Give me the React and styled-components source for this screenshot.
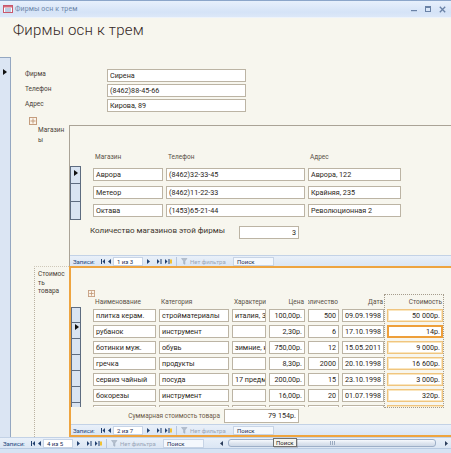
import React from 'react';
import styled, { createGlobalStyle } from 'styled-components';

const FONT = `Roboto, "Open Sans", "Noto Sans", sans-serif`;

const GlobalStyle = createGlobalStyle`
  html, body { margin: 0; padding: 0; background: #f7f6ee; overflow: hidden; }
  #root { width: 451px; height: 453px; }
  * { box-sizing: border-box; }
`;

const Window = styled.div`
  width: 451px; height: 453px; display: flex; flex-direction: column; overflow: hidden;
  background: #f7f6ee; font-family: ${FONT}; color: #2b2620; position: relative;
`;

const TitleBar = styled.div`
  height: 18px; flex: none; display: flex; align-items: center; padding: 0 4px 0 3px;
  border-top: 1px solid #8ca6ca;
  background: linear-gradient(#e7f0fc, #d5e3f7 70%, #dce8f8);
  border-bottom: 1px solid #edf3fb;
`;
const TitleText = styled.span`
  font-size: 7px; color: #6d86aa; margin-left: 2px; flex: 1; letter-spacing: 0.1px;
`;
const WinControls = styled.div`
  display: flex; align-items: center; gap: 8px; padding-right: 1px;
`;

const FormHeader = styled.div`
  height: 39px; flex: none; padding: 1px 0 0 13px;
`;
const FormTitle = styled.h1`
  margin: 0; font-weight: 300; font-size: 15px; line-height: 22px; color: #35271f; letter-spacing: 0.2px;
`;

const MainArea = styled.div`
  display: flex; height: 380px; flex: none;
`;
const FormSelector = styled.div`
  width: 11px; flex: none; background: #dbe5f3; border-right: 1px solid #94a7c1;
  border-top: 1px solid #94a7c1; padding: 2px 0 0 3px;
`;
const Detail = styled.div`
  flex: 1; min-width: 0; display: flex; flex-direction: column; overflow: hidden;
`;

const FieldGrid = styled.div`
  display: grid; grid-template-columns: 82px 139px; row-gap: 2px; padding: 12px 0 0 14px;
`;
const FieldLabel = styled.div`
  font-size: 6.5px; line-height: 11px; color: #4a4238;
`;
const Box = styled.div`
  height: ${p => p.$h || 13}px;
  border: 1px solid #bcb4a4;
  background: #fff;
  font-size: 7.2px;
  line-height: ${p => (p.$h || 13) - 2}px;
  padding: 0 2px;
  white-space: nowrap;
  overflow: hidden;
  text-overflow: clip;
  text-align: ${p => (p.$right ? 'right' : 'left')};
  color: #2b2620;
  ${p => p.$accent && `border-color: #f0c57f; box-shadow: 0 0 0 1px #fae6bf inset;`}
  ${p => p.$focus && `border: 2px solid #ee9f3a; line-height: ${(p.$h || 13) - 4}px; padding: 0 1px; box-shadow: none;`}
`;

const ExpandWrap = styled.div`
  margin: ${p => p.$mt}px 0 0 ${p => p.$ml}px; width: ${p => p.$s}px; height: ${p => p.$s}px; line-height: 0;
`;

const SubRow = styled.div`
  display: grid; grid-template-columns: 58px 1fr; height: ${p => p.$h}px; flex: none;
`;
const SubLabelCol = styled.div`
  padding-left: ${p => p.$pl}px;
`;
const SubLabelText = styled.div`
  width: 28px; font-size: 6.5px; line-height: ${p => p.$lh}px; color: #4a4238; overflow-wrap: anywhere;
`;
const DottedLabel = styled.div`
  width: 35px; height: 100%; border-left: 1px dotted #bab2a2; border-top: 1px dotted #cfc8b9;
  padding: 3px 0 0 3px;
`;

const Subform1 = styled.div`
  border-top: 1px solid #aaa396; border-left: 1px solid #aaa396;
  display: flex; flex-direction: column; min-width: 0;
`;
const Subform2 = styled.div`
  border: 2px solid #eea43f; border-right: none;
  display: flex; flex-direction: column; min-width: 0; position: relative;
`;

const HeaderRow = styled.div`
  display: grid; grid-template-columns: ${p => p.$cols}; column-gap: 3px;
  margin: ${p => p.$mt}px 0 0 ${p => p.$ml}px; height: ${p => p.$h}px;
`;
const HeadCell = styled.div`
  font-size: 6.5px; line-height: ${p => p.$h}px; color: #5a5247; white-space: nowrap; overflow: hidden;
  display: flex; justify-content: ${p => (p.$right ? 'flex-end' : 'flex-start')};
  padding: 0 ${p => (p.$right ? 1 : 0)}px 0 ${p => (p.$right ? 0 : 2)}px;
  & > span { flex: none; }
`;

const Rows = styled.div`
  height: ${p => p.$h}px; overflow: hidden; flex: none; margin-top: ${p => p.$mt || 0}px;
`;
const DataRow = styled.div`
  display: flex; height: ${p => p.$h}px;
`;
const RowSelector = styled.div`
  width: ${p => p.$w}px; flex: none; height: 100%;
  background: #d9e4f2;
  border: 1px solid #5e6c80;
  border-top-width: ${p => (p.$first ? 1 : 0)}px;
  padding: ${p => p.$pt}px 0 0 3px; line-height: 0;
`;
const Cells = styled.div`
  display: grid; grid-template-columns: ${p => p.$cols}; column-gap: 3px;
  margin-left: ${p => p.$ml}px; padding-top: ${p => p.$pt}px; align-content: start;
`;

const CountRow = styled.div`
  display: flex; align-items: center; margin-top: 6px; padding-left: 20px; height: 13px;
`;
const CountLabel = styled.div`
  width: 149px; font-size: 8px; color: #3c352d; white-space: nowrap; line-height: 11px; margin-top: -4px;
`;
const SumRow = styled.div`
  display: flex; align-items: center; margin-top: 2px; height: 14px; flex: none;
`;
const SumLabel = styled.div`
  width: 149px; text-align: right; font-size: 6.5px; color: #6b5a48; white-space: nowrap;
`;

const ColumnOutline = styled.div`
  position: absolute; left: 313px; top: 26px; width: 60px; height: 114px;
  border: 1px dotted #a59c8c; pointer-events: none;
`;

/* Navigation bars */
const NavWrap = styled.div`
  height: 11px; flex: none; display: flex; align-items: center;
  background: linear-gradient(#e9f0f9, #dbe6f4);
  border-top: 1px solid #c3d2e6;
  padding-left: ${p => p.$pl}px; margin-top: ${p => (p.$auto ? 'auto' : `${p.$mt || 0}px`)};
  position: relative;
`;
const NavGrid = styled.div`
  display: grid; height: 100%; align-items: center;
  grid-template-columns: 26px 7px 7px 30px 11px 10px 9px 6px 11px 43px 41px;
  flex: none;
`;
const NavLabel = styled.span`
  font-size: 6px; color: #21447c; white-space: nowrap;
`;
const NavBtn = styled.span`
  display: flex; justify-content: center; align-items: center; line-height: 0;
`;
const RecordBox = styled.span`
  height: 9px; background: #fff; border: 1px solid #c7d4e6; font-size: 6px; line-height: 7px;
  color: #1b2f55; padding-left: 3px; white-space: nowrap;
`;
const NavSep = styled.span`
  width: 1px; height: 9px; background: #b7c6dc; justify-self: center;
`;
const FilterText = styled.span`
  font-size: 6px; color: #9aa6b8; white-space: nowrap;
`;
const SearchBox = styled.span`
  height: 9px; background: #f4f8fd; border: 1px solid #c7d4e6; font-size: 6px; line-height: 7px;
  color: #1b2f55; padding-left: 3px; white-space: nowrap;
`;

const HScroll = styled.div`
  margin-left: 15px; flex: 1; height: 100%; display: flex; align-items: center; gap: 2px; padding-right: 2px;
`;
const ScrollArrow = styled.span`
  width: 5px; flex: none; display: flex; justify-content: center; line-height: 0;
`;
const ScrollTrack = styled.div`
  flex: 1; height: 9px; display: flex; align-items: center; padding: 0 6px 0 2px;
`;
const ScrollThumb = styled.div`
  flex: 1; height: 8px; border: 1px solid #9dafc8; border-radius: 3px;
  background: linear-gradient(#f6f9fd, #dbe3ee 60%, #cfd9e7);
  display: flex; justify-content: center; align-items: center; gap: 1px;
  & > i { width: 1px; height: 4px; background: #9aaac0; display: block; }
`;
const Tooltip = styled.div`
  position: absolute; left: 273px; top: 0px; height: 9px; padding: 0 2px;
  background: #f5f5ef; border: 1px solid #6f6f6f; font-size: 6px; line-height: 7px; color: #222;
  box-shadow: 1px 1px 0 rgba(0,0,0,0.15);
`;
const BottomStrip = styled.div`
  height: 5px; flex: none; background: #d6e3f4; border-top: 1px solid #b9cbe2;
`;

/* Icons */
const NAVY = '#22406f';
const FirstIcon = () => (
  <svg width="4" height="5" viewBox="0 0 4 5"><rect x="0" y="0" width="1" height="5" fill={NAVY} /><path d="M4 0L1.5 2.5L4 5Z" fill={NAVY} /></svg>
);
const PrevIcon = () => (
  <svg width="3" height="5" viewBox="0 0 3 5"><path d="M3 0L0 2.5L3 5Z" fill={NAVY} /></svg>
);
const NextIcon = () => (
  <svg width="3" height="5" viewBox="0 0 3 5"><path d="M0 0L3 2.5L0 5Z" fill={NAVY} /></svg>
);
const LastIcon = () => (
  <svg width="5" height="5" viewBox="0 0 5 5"><path d="M0 0L2.5 2.5L0 5Z" fill={NAVY} /><rect x="3.5" y="0" width="1" height="5" fill={NAVY} /></svg>
);
const NewIcon = () => (
  <svg width="7" height="5" viewBox="0 0 7 5"><path d="M0 0L2.5 2.5L0 5Z" fill={NAVY} /><rect x="3.5" y="0" width="1" height="5" fill={NAVY} /><rect x="5" y="0.5" width="2" height="4" fill="#f1c232" /></svg>
);
const FilterIcon = () => (
  <svg width="7" height="7" viewBox="0 0 7 7"><path d="M0.5 0.5H6L3.9 3V6.3L2.6 5.6V3Z" fill="#b4bfcd" stroke="#98a6b8" strokeWidth="0.5" /></svg>
);
const RowArrow = () => (
  <svg width="4" height="6" viewBox="0 0 4 6"><path d="M0 0L4 3L0 6Z" fill="#111" /></svg>
);
const ExpandIcon = ({ s }) => (
  <svg width={s} height={s} viewBox="0 0 8 8">
    <rect x="0.5" y="0.5" width="7" height="7" fill="#fbf4ea" stroke="#c49d7e" strokeWidth="1" />
    <path d="M4 1.5V6.5M1.5 4H6.5" stroke="#c49d7e" strokeWidth="1" />
  </svg>
);
const FormIcon = () => (
  <svg width="10" height="8" viewBox="0 0 10 8">
    <rect x="0.5" y="0.5" width="9" height="7" fill="#fff" stroke="#c9576b" strokeWidth="1" />
    <rect x="1" y="1" width="8" height="1.5" fill="#d26b7d" />
    <path d="M2 4H8M2 6H8" stroke="#5a7fb5" strokeWidth="0.8" />
  </svg>
);
const MinIcon = () => (<svg width="6" height="6" viewBox="0 0 6 6"><rect x="0" y="4" width="6" height="1.2" fill="#6a82a6" /></svg>);
const MaxIcon = () => (<svg width="6" height="6" viewBox="0 0 6 6"><rect x="0.5" y="0.5" width="5" height="5" fill="none" stroke="#6a82a6" strokeWidth="1" /><rect x="0.5" y="0.5" width="5" height="1.5" fill="#6a82a6" /></svg>);
const CloseIcon = () => (<svg width="7" height="7" viewBox="0 0 7 7"><path d="M0.8 0.8L6.2 6.2M6.2 0.8L0.8 6.2" stroke="#6a82a6" strokeWidth="1.3" /></svg>);
const ScrollLeft = () => (<svg width="3" height="5" viewBox="0 0 3 5"><path d="M3 0L0 2.5L3 5Z" fill="#2c3e5c" /></svg>);
const ScrollRight = () => (<svg width="3" height="5" viewBox="0 0 3 5"><path d="M0 0L3 2.5L0 5Z" fill="#2c3e5c" /></svg>);

function NavControls({ record }) {
  return (
    <NavGrid>
      <NavLabel>Записи:</NavLabel>
      <NavBtn><FirstIcon /></NavBtn>
      <NavBtn><PrevIcon /></NavBtn>
      <RecordBox>{record}</RecordBox>
      <NavBtn><NextIcon /></NavBtn>
      <NavBtn><LastIcon /></NavBtn>
      <NavBtn><NewIcon /></NavBtn>
      <NavSep />
      <NavBtn><FilterIcon /></NavBtn>
      <FilterText>Нет фильтра</FilterText>
      <SearchBox>Поиск</SearchBox>
    </NavGrid>
  );
}

const SHOP_COLS = '70px 139px 93px';
const shops = [
  ['Аврора', '(8462)32-33-45', 'Аврора, 122'],
  ['Метеор', '(8462)11-22-33', 'Крайняя, 235'],
  ['Октава', '(1453)65-21-44', 'Революционная 2'],
];

const GOODS_COLS = '63px 70px 34px 36px 31px 42px 56px';
const goodsHead = [
  ['Наименование', false], ['Категория', false], ['Характеристика', false],
  ['Цена', true], ['Количество', true], ['Дата', true], ['Стоимость', true],
];
const goods = [
  ['плитка керам.', 'стройматериалы', 'италия, 300х300', '100,00р.', '500', '09.09.1998', '50 000р.'],
  ['рубанок', 'инструмент', '', '2,30р.', '6', '17.10.1998', '14р.'],
  ['ботинки муж.', 'обувь', 'зимние, кожаные', '750,00р.', '12', '15.05.2011', '9 000р.'],
  ['гречка', 'продукты', '', '8,30р.', '2000', '20.10.1998', '16 600р.'],
  ['сервиз чайный', 'посуда', '17 предметов', '200,00р.', '15', '23.10.1998', '3 000р.'],
  ['бокорезы', 'инструмент', '', '16,00р.', '20', '01.07.1998', '320р.'],
  ['', '', '', '', '', '', ''],
];

export default function App() {
  return (
    <Window>
      <GlobalStyle />
      <TitleBar>
        <FormIcon />
        <TitleText>Фирмы осн к трем</TitleText>
        <WinControls>
          <MinIcon />
          <MaxIcon />
          <CloseIcon />
        </WinControls>
      </TitleBar>

      <FormHeader>
        <FormTitle>Фирмы осн к трем</FormTitle>
      </FormHeader>

      <MainArea>
        <FormSelector><RowArrow /></FormSelector>
        <Detail>
          <FieldGrid>
            <FieldLabel>Фирма</FieldLabel>
            <Box>Сирена</Box>
            <FieldLabel>Телефон</FieldLabel>
            <Box>(8462)88-45-66</Box>
            <FieldLabel>Адрес</FieldLabel>
            <Box>Кирова, 89</Box>
          </FieldGrid>

          <ExpandWrap $mt={5} $ml={18} $s={8}><ExpandIcon s={8} /></ExpandWrap>

          <SubRow $h={141}>
            <SubLabelCol $pl={27}>
              <SubLabelText $lh={10}>Магазины</SubLabelText>
            </SubLabelCol>
            <Subform1>
              <HeaderRow $cols={SHOP_COLS} $mt={26} $ml={23} $h={10}>
                <HeadCell $h={10}><span>Магазин</span></HeadCell>
                <HeadCell $h={10}><span>Телефон</span></HeadCell>
                <HeadCell $h={10}><span>Адрес</span></HeadCell>
              </HeaderRow>
              <Rows $h={54} $mt={4}>
                {shops.map((r, i) => (
                  <DataRow key={i} $h={18}>
                    <RowSelector $w={11} $first={i === 0} $pt={3}>{i === 0 && <RowArrow />}</RowSelector>
                    <Cells $cols={SHOP_COLS} $ml={12} $pt={2}>
                      {r.map((c, j) => <Box key={j}>{c}</Box>)}
                    </Cells>
                  </DataRow>
                ))}
              </Rows>
              <CountRow>
                <CountLabel>Количество магазинов этой фирмы</CountLabel>
                <Box $right style={{ width: 60 }}>3</Box>
              </CountRow>
              <NavWrap $pl={3} $auto>
                <NavControls record="1 из 3" />
              </NavWrap>
            </Subform1>
          </SubRow>

          <SubRow $h={171}>
            <SubLabelCol $pl={23}>
              <DottedLabel>
                <SubLabelText $lh={8.5}>Стоимость товара</SubLabelText>
              </DottedLabel>
            </SubLabelCol>
            <Subform2>
              <ColumnOutline />
              <ExpandWrap $mt={22} $ml={17} $s={7}><ExpandIcon s={7} /></ExpandWrap>
              <HeaderRow $cols={GOODS_COLS} $mt={0} $ml={22} $h={10}>
                {goodsHead.map(([t, r], j) => (
                  <HeadCell key={j} $h={10} $right={r}><span>{t}</span></HeadCell>
                ))}
              </HeaderRow>
              <Rows $h={100}>
                {goods.map((r, i) => (
                  <DataRow key={i} $h={16}>
                    <RowSelector $w={10} $first={i === 0} $pt={1}>{i === 1 && <RowArrow />}</RowSelector>
                    <Cells $cols={GOODS_COLS} $ml={12} $pt={2}>
                      {r.map((c, j) => (
                        <Box key={j} $right={j >= 3} $accent={j === 6 && i !== 1} $focus={j === 6 && i === 1}>{c}</Box>
                      ))}
                    </Cells>
                  </DataRow>
                ))}
              </Rows>
              <SumRow>
                <SumLabel>Суммарная стоимость товара</SumLabel>
                <Box $right $h={14} style={{ width: 75, marginLeft: 4 }}>79 154р.</Box>
              </SumRow>
              <NavWrap $pl={2} $mt={1}>
                <NavControls record="2 из 7" />
              </NavWrap>
            </Subform2>
          </SubRow>
        </Detail>
      </MainArea>

      <NavWrap $pl={3}>
        <NavControls record="4 из 5" />
        <HScroll>
          <ScrollArrow><ScrollLeft /></ScrollArrow>
          <ScrollTrack>
            <ScrollThumb><i /><i /><i /></ScrollThumb>
          </ScrollTrack>
          <ScrollArrow><ScrollRight /></ScrollArrow>
        </HScroll>
        <Tooltip>Поиск</Tooltip>
      </NavWrap>
      <BottomStrip />
    </Window>
  );
}
